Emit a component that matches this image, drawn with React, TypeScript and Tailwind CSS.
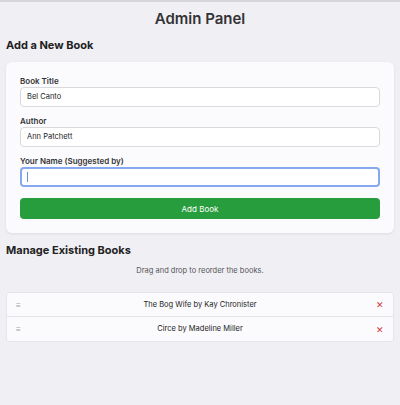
import React from "react";

const font = { fontFamily: "Inter, 'Liberation Sans', Arial, sans-serif" };

function Field({ label, value, focused }: { label: string; value?: string; focused?: boolean }) {
  return (
    <div>
      <div className="text-[8px] leading-[12px] font-semibold text-[#333336]">{label}</div>
      <div
        className={
          focused
            ? "h-[20px] rounded-[4px] border-2 border-[#85a8f0] bg-white flex items-center pl-[5px]"
            : "h-[20px] rounded-[4px] border border-[#d9d9dd] bg-white flex items-center pl-[6px]"
        }
      >
        {focused ? (
          <span className="w-px h-[10px] bg-[#6b8fd6]" />
        ) : (
          <span className="text-[7.5px] text-[#222]">{value}</span>
        )}
      </div>
    </div>
  );
}

function Row({ text, last }: { text: string; last?: boolean }) {
  return (
    <div
      className={
        "h-[24px] flex items-center px-[9px] " + (last ? "" : "border-b border-[#e4e4e8]")
      }
    >
      <span className="text-[8px] text-[#a0a0a4] w-[10px]">≡</span>
      <span className="flex-1 text-center text-[7.5px] text-[#222]">{text}</span>
      <span className="text-[9px] leading-none text-[#d33540] w-[10px] text-right">✕</span>
    </div>
  );
}

export default function App() {
  return (
    <div
      className="min-h-[405px] bg-[#f0eff4] border-t-2 border-[#d6d5da] px-[6px]"
      style={font}
    >
      <h1 className="pt-[6px] text-center text-[15px] leading-[22px] font-semibold text-[#333336]">
        Admin Panel
      </h1>
      <h2 className="mt-[7px] text-[11px] leading-[16px] font-bold text-[#222]">Add a New Book</h2>
      <div className="mt-[9px] bg-[#fbfbfd] rounded-[6px] shadow-[0_1px_3px_rgba(0,0,0,0.08)] px-[14px] pt-[13px] pb-[14px]">
        <div className="flex flex-col gap-[8px]">
          <Field label="Book Title" value="Bel Canto" />
          <Field label="Author" value="Ann Patchett" />
          <Field label="Your Name (Suggested by)" focused />
        </div>
        <button className="mt-[11px] w-full h-[21px] rounded-[4px] bg-[#289d3d] text-white text-[8px] flex items-center justify-center">
          Add Book
        </button>
      </div>
      <h2 className="mt-[9px] text-[11px] leading-[16px] font-bold text-[#222]">
        Manage Existing Books
      </h2>
      <p className="mt-[7px] text-center text-[7.5px] leading-[12px] text-[#555558]">
        Drag and drop to reorder the books.
      </p>
      <div className="mt-[15px] bg-[#fbfbfd] rounded-[3px] border border-[#e6e6ea]">
        <Row text="The Bog Wife by Kay Chronister" />
        <Row text="Circe by Madeline Miller" last />
      </div>
    </div>
  );
}
